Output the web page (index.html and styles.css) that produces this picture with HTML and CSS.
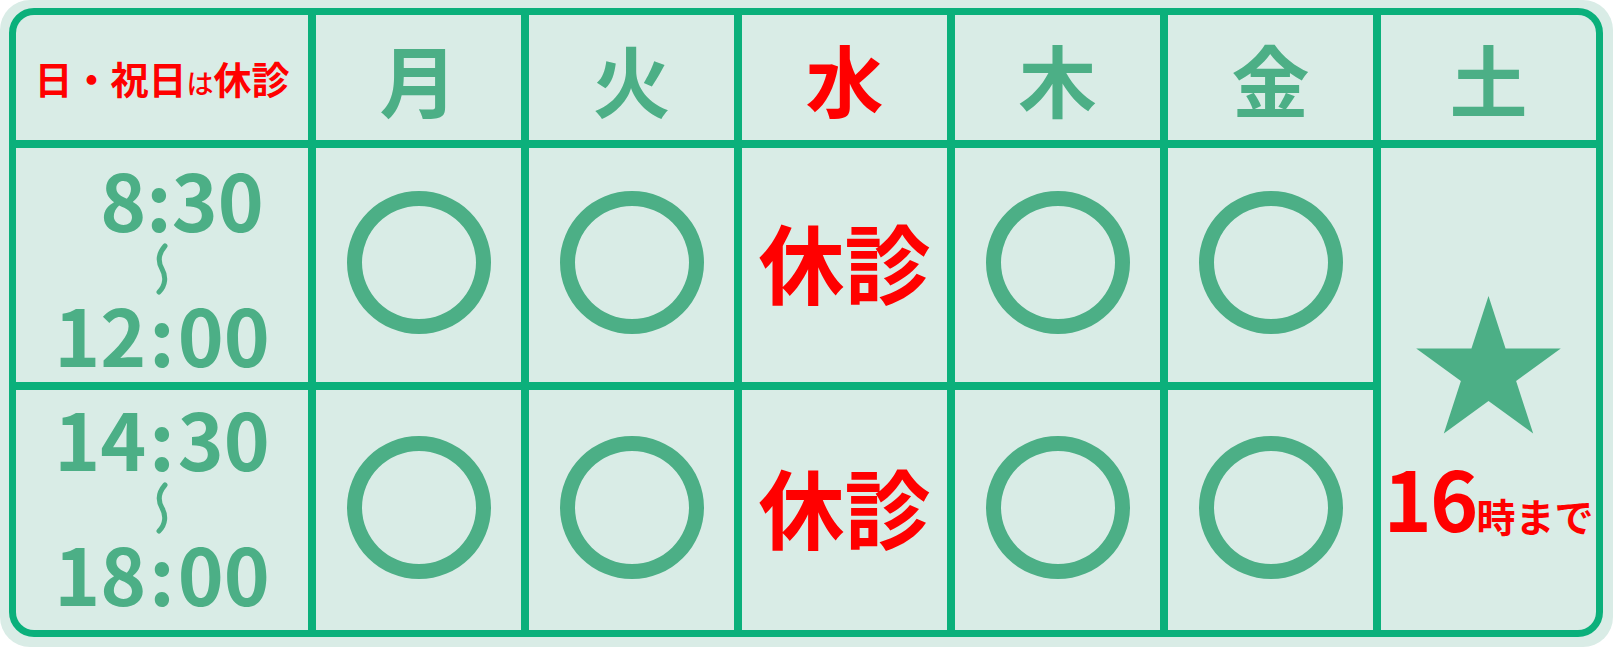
FILE: index.html
```html
<!DOCTYPE html>
<html lang="ja">
<head>
<meta charset="utf-8">
<title>診療時間</title>
<link rel="stylesheet" href="styles.css">
</head>
<body>
<div class="frame">
  <div class="schedule">
    <div class="cell head note">日・祝日<span class="small">は</span>休診</div>
    <div class="cell head">月</div>
    <div class="cell head">火</div>
    <div class="cell head red">水</div>
    <div class="cell head">木</div>
    <div class="cell head">金</div>
    <div class="cell head">土</div>

    <div class="cell time time-am">
      <div class="t-line t-first">8:30</div>
      <svg class="wave" width="14" height="52" viewBox="0 0 14 52"><path d="M10 3 C3 11 3 19 7 26 C11 33 11 42 4 49" fill="none" stroke="#4caf86" stroke-width="5" stroke-linecap="round"/></svg>
      <div class="t-line">12<span class="colon">:</span>00</div>
    </div>
    <div class="cell mark"><span class="ring"></span></div>
    <div class="cell mark"><span class="ring"></span></div>
    <div class="cell closed">休診</div>
    <div class="cell mark"><span class="ring"></span></div>
    <div class="cell mark"><span class="ring"></span></div>
    <div class="cell sat">
      <svg class="star" width="145" height="138" viewBox="0 0 145 138"><polygon points="72.5,0 89.56,52.51 144.78,52.51 100.11,84.97 117.17,137.49 72.5,105.03 27.83,137.49 44.89,84.97 0.22,52.51 55.44,52.51" fill="#4caf86"/></svg>
      <div class="until"><span class="until-num">16</span><span class="until-txt">時まで</span></div>
    </div>

    <div class="cell time time-pm">
      <div class="t-line">14<span class="colon">:</span>30</div>
      <svg class="wave" width="14" height="52" viewBox="0 0 14 52"><path d="M10 3 C3 11 3 19 7 26 C11 33 11 42 4 49" fill="none" stroke="#4caf86" stroke-width="5" stroke-linecap="round"/></svg>
      <div class="t-line">18<span class="colon">:</span>00</div>
    </div>
    <div class="cell mark"><span class="ring"></span></div>
    <div class="cell mark"><span class="ring"></span></div>
    <div class="cell closed">休診</div>
    <div class="cell mark"><span class="ring"></span></div>
    <div class="cell mark"><span class="ring"></span></div>
  </div>
</div>
</body>
</html>
```
FILE: styles.css
```css
html, body {
  margin: 0;
  padding: 0;
  background: #ffffff;
}

body {
  font-family: "Noto Sans CJK JP", "Noto Sans", sans-serif;
}

.frame {
  width: 1613px;
  height: 647px;
  box-sizing: border-box;
  padding: 8px 9px 10px 9px;
  background: #d9ece6;
  border-radius: 30px;
}

.schedule {
  display: grid;
  grid-template-columns: 292px repeat(5, 205px) 215px;
  grid-template-rows: 125px 234px 240px;
  gap: 8px;
  border: 7px solid #0bb07b;
  background: #0bb07b;
  border-radius: 25px;
  overflow: hidden;
  width: max-content;
}

.cell {
  background: #d9ece6;
  display: flex;
  align-items: center;
  justify-content: center;
  color: #4caf86;
}

.head {
  font-size: 78px;
  font-weight: 700;
  line-height: 1;
}

.red {
  color: #ff0000;
}

.note {
  color: #ff0000;
  font-size: 38px;
  font-weight: 700;
  align-items: baseline;
  line-height: 125px;
}

.note .small {
  font-size: 27px;
  font-weight: 500;
}

.time {
  flex-direction: column;
  font-size: 78px;
  font-weight: 700;
  line-height: 1;
}

.time-pm {
  padding-bottom: 12px;
}

.t-line {
  white-space: nowrap;
}

.t-first {
  padding-left: 40px;
}

.colon {
  margin: 0 3px;
}

.wave {
  display: block;
  margin: 6px 0 -1px 0;
}

.mark {
  padding-bottom: 6px;
}

.ring {
  display: block;
  width: 144px;
  height: 143px;
  box-sizing: border-box;
  border: 15px solid #4caf86;
  border-radius: 50%;
}

.closed {
  color: #ff0000;
  font-size: 86px;
  font-weight: 700;
  line-height: 1;
  padding-bottom: 8px;
}

.sat {
  grid-column: 7;
  grid-row: 2 / span 2;
  flex-direction: column;
  justify-content: flex-start;
  padding-top: 148px;
}

.star {
  display: block;
}

.until {
  margin-top: 22px;
  color: #ff0000;
  font-weight: 700;
  line-height: 1;
  white-space: nowrap;
}

.until-num {
  font-size: 82px;
  letter-spacing: -2px;
}

.until-txt {
  font-size: 39px;
  font-weight: 700;
}
```
